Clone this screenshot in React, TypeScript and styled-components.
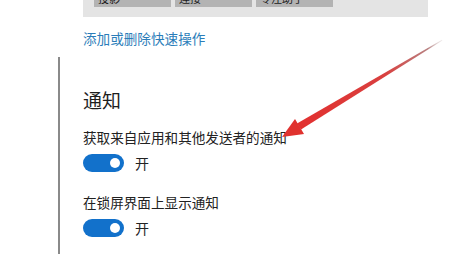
import React from "react";
import styled, { createGlobalStyle } from "styled-components";

const Global = createGlobalStyle`
  html, body { margin: 0; padding: 0; background: #ffffff; }
  body { font-family: "Noto Sans CJK SC", "Noto Sans", sans-serif; color: #222; overflow: hidden; }
`;

const Page = styled.div`
  position: relative;
  width: 475px;
  height: 254px;
  overflow: hidden;
  padding-left: 83px;
  box-sizing: border-box;
`;

const QuickPanel = styled.div`
  width: 345px;
  box-sizing: border-box;
  margin-top: -23px;
  padding: 0 11px 10px 11px;
  background: #e4e4e4;
  display: flex;
  gap: 4px;
`;

const Tile = styled.div`
  width: 77px;
  height: 30px;
  background: #b3b3b3;
  display: flex;
  align-items: flex-end;
  padding: 0 4px 2px 4px;
  box-sizing: border-box;
  font-size: 11px;
  line-height: 14px;
  color: #1a1a1a;
`;

const Link = styled.div`
  margin-top: 11px;
  font-size: 13.6px;
  line-height: 20px;
  color: #2b7db9;
`;

const Section = styled.div`
  margin-top: 9px;
  margin-left: -25px;
  padding-left: 23px;
  border-left: 2px solid #8a8a8a;
  height: 200px;
  display: flex;
  flex-direction: column;
`;

const Heading = styled.div`
  margin-top: 30px;
  font-size: 19px;
  line-height: 26px;
  color: #1e1e1e;
`;

const Label = styled.div<{ $gap: number }>`
  margin-top: ${(p) => p.$gap}px;
  font-size: 13.6px;
  line-height: 20px;
  color: #222;
`;

const ToggleRow = styled.div<{ $gap: number }>`
  margin-top: ${(p) => p.$gap}px;
  height: 20px;
  display: flex;
  align-items: center;
  gap: 11px;
`;

const Track = styled.div`
  width: 41px;
  height: 18px;
  border-radius: 9px;
  background: #1271cb;
  position: relative;
  display: flex;
  align-items: center;
  justify-content: flex-end;
  padding-right: 4px;
  box-sizing: border-box;
`;

const Knob = styled.div`
  width: 10px;
  height: 10px;
  border-radius: 50%;
  background: #ffffff;
`;

const StateText = styled.span`
  font-size: 14px;
  line-height: 20px;
  color: #222;
`;

const ArrowLayer = styled.svg`
  position: absolute;
  left: 0;
  top: 0;
  pointer-events: none;
`;

const Toggle = () => (
  <Track>
    <Knob />
  </Track>
);

export default function App() {
  return (
    <>
      <Global />
      <Page>
        <QuickPanel>
          <Tile>投影</Tile>
          <Tile>连接</Tile>
          <Tile>专注助手</Tile>
        </QuickPanel>
        <Link>添加或删除快速操作</Link>
        <Section>
          <Heading>通知</Heading>
          <Label $gap={14}>获取来自应用和其他发送者的通知</Label>
          <ToggleRow $gap={6}>
            <Toggle />
            <StateText>开</StateText>
          </ToggleRow>
          <Label $gap={19}>在锁屏界面上显示通知</Label>
          <ToggleRow $gap={6}>
            <Toggle />
            <StateText>开</StateText>
          </ToggleRow>
        </Section>
        <ArrowLayer width={475} height={254} viewBox="0 0 475 254">
          <defs>
            <linearGradient id="shaft" x1="300" y1="127" x2="442" y2="40" gradientUnits="userSpaceOnUse">
              <stop offset="0" stopColor="#e2302f" />
              <stop offset="0.6" stopColor="#d9403f" />
              <stop offset="0.9" stopColor="#b88080" />
              <stop offset="1" stopColor="#d8d0d0" stopOpacity="0.4" />
            </linearGradient>
            <filter id="soft" x="-10%" y="-10%" width="120%" height="120%">
              <feGaussianBlur stdDeviation="0.6" />
            </filter>
          </defs>
          <g filter="url(#soft)">
            <polygon points="301,129.5 297,123.5 442,39.7 442.4,40.4" fill="url(#shaft)" />
            <polygon points="282,137 295,119 304,134" fill="#e0302f" />
          </g>
        </ArrowLayer>
      </Page>
    </>
  );
}
